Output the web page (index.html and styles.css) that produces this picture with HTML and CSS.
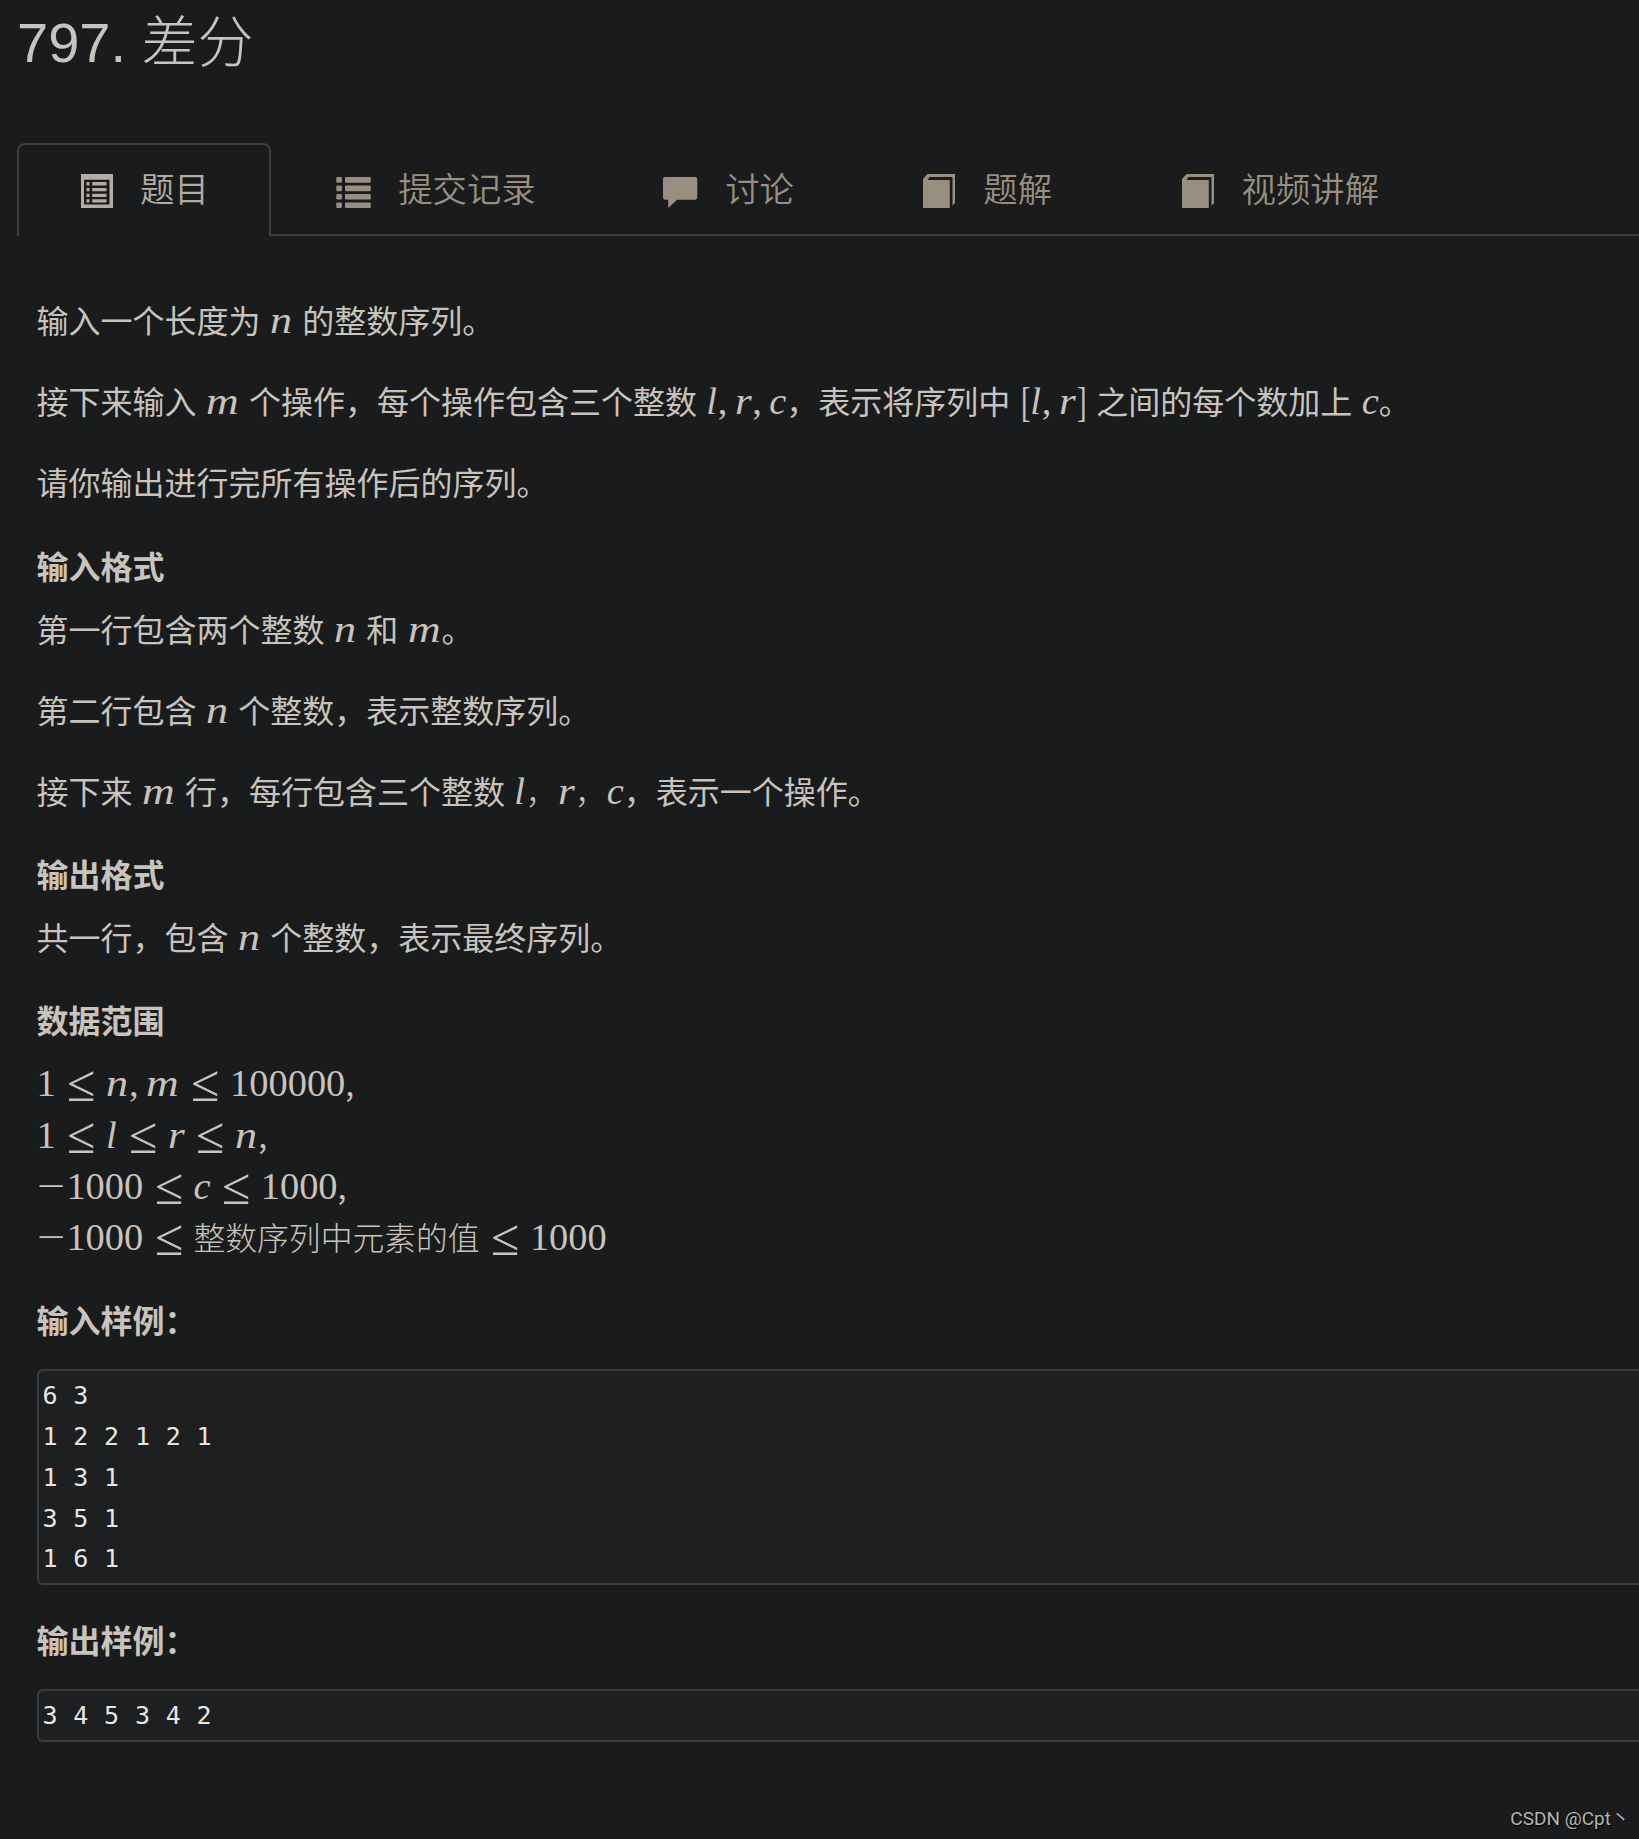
FILE: index.html
```html
<!DOCTYPE html>
<html lang="zh-CN">
<head>
  <meta charset="UTF-8" />
  <meta name="viewport" content="width=device-width, initial-scale=1.0"/>
  <title>797. 差分</title>
  <link rel="stylesheet" href="styles.css">
</head>
<body>

  <h1 class="title">797. 差分</h1>

  <div class="tabs">
    <a class="tab active">
      <svg class="icon" viewBox="0 0 34 34"><path fill-rule="evenodd" d="M3 0H35V34H3ZM6 5.7V30.5H31.5V5.7Z"/><path d="M8.5 8h3v3.5h-3zM14.2 8h14.3v3.5H14.2zM8.5 14h3v3.3h-3zM14.2 14h14.3v3.3H14.2zM8.5 19.7h3V23h-3zM14.2 19.7h14.3V23H14.2zM8.5 25.2h3v3.4h-3zM14.2 25.2h14.3v3.4H14.2z"/></svg>
      <span>题目</span>
    </a>
    <a class="tab">
      <svg class="icon" viewBox="0 0 34 34"><rect x="0.3" y="3" width="5.6" height="5.7" rx="1"/><rect x="9" y="3" width="25.8" height="5.7" rx="1"/><rect x="0.3" y="11.6" width="5.6" height="5.6" rx="1"/><rect x="9" y="11.6" width="25.8" height="5.6" rx="1"/><rect x="0.3" y="20" width="5.6" height="5.6" rx="1"/><rect x="9" y="20" width="25.8" height="5.6" rx="1"/><rect x="0.3" y="28.4" width="5.6" height="5.6" rx="1"/><rect x="9" y="28.4" width="25.8" height="5.6" rx="1"/></svg>
      <span>提交记录</span>
    </a>
    <a class="tab">
      <svg class="icon" viewBox="0 0 34 34"><path d="M2 3H32.3Q34.3 3 34.3 5V23.6Q34.3 25.7 32.3 25.7H14.2L5.2 34V25.7H2Q0 25.7 0 23.6V5Q0 3 2 3Z"/></svg>
      <span>讨论</span>
    </a>
    <a class="tab">
      <svg class="icon" viewBox="0 0 34 34"><path d="M2 5L6.5 0H34V29L31.5 31.5V3H8.5L6.5 6H28.8V34H2Z"/></svg>
      <span>题解</span>
    </a>
    <a class="tab">
      <svg class="icon" viewBox="0 0 34 34"><path d="M2 5L6.5 0H34V29L31.5 31.5V3H8.5L6.5 6H28.8V34H2Z"/></svg>
      <span>视频讲解</span>
    </a>
    <div class="tabs-rest"></div>
  </div>

  <div class="content">
    <p>输入一个长度为 <span class="math"><i class="n">n</i></span> 的整数序列。</p>
    <p>接下来输入 <span class="math"><i class="m">m</i></span> 个操作，每个操作包含三个整数 <span class="math"><i class="l">l</i><b>,</b><i class="r">r</i><b>,</b><i class="c">c</i></span>，表示将序列中 <span class="math"><u>[</u><i class="l">l</i><b>,</b><i class="r">r</i><u>]</u></span> 之间的每个数加上 <span class="math"><i class="c">c</i></span>。</p>
    <p>请你输出进行完所有操作后的序列。</p>

    <h4>输入格式</h4>
    <p>第一行包含两个整数 <span class="math"><i class="n">n</i></span> 和 <span class="math"><i class="m">m</i></span>。</p>
    <p>第二行包含 <span class="math"><i class="n">n</i></span> 个整数，表示整数序列。</p>
    <p>接下来 <span class="math"><i class="m">m</i></span> 行，每行包含三个整数 <span class="math"><i class="l">l</i><em>，</em><i class="r">r</i><em>，</em><i class="c">c</i></span>，表示一个操作。</p>

    <h4>输出格式</h4>
    <p>共一行，包含 <span class="math"><i class="n">n</i></span> 个整数，表示最终序列。</p>

    <h4>数据范围</h4>
    <p>
      <span class="math">1<s>≤</s><i class="n">n</i><b>,</b><i class="m">m</i><s>≤</s>100000</span>,<br />
      <span class="math">1<s>≤</s><i class="l">l</i><s>≤</s><i class="r">r</i><s>≤</s><i class="n">n</i></span>,<br />
      <span class="math"><s class="minus">−</s>1000<s>≤</s><i class="c">c</i><s>≤</s>1000</span>,<br />
      <span class="math"><s class="minus">−</s>1000<s>≤</s><em>整数序列中元素的值</em><s>≤</s>1000</span>
    </p>

    <h4>输入样例：</h4>
<pre>6 3
1 2 2 1 2 1
1 3 1
3 5 1
1 6 1</pre>

    <h4>输出样例：</h4>
<pre>3 4 5 3 4 2</pre>
  </div>

  <div class="watermark">CSDN @Cpt丶</div>

</body>
</html>
```

FILE: styles.css
```css
* {
  box-sizing: border-box;
}
body {
  margin: 0;
  height: 1839px;
  overflow: hidden;
  background: #1a1b1c;
  color: #c8c3bc;
  font-family: "Liberation Sans", "Noto Sans CJK SC", sans-serif;
  font-size: 32px;
}
.title {
  margin: 0;
  padding: 12px 0 0 17px;
  height: 143px;
  font-size: 56px;
  font-weight: 300;
  line-height: 62px;
}

/* tabs */
.tabs {
  display: flex;
  height: 93px;
  padding-left: 17px;
}
.tab {
  display: flex;
  flex: none;
  align-items: center;
  padding: 2px 62px 0 65.4px;
  border-bottom: 2px solid #3c3e40;
  color: #988f81;
  font-size: 34.4px;
  line-height: 44px;
}
.tab.active {
  padding: 0 60px 2px 59px;
  border: 2px solid #3c3e40;
  border-bottom: 0;
  border-radius: 8px 8px 0 0;
  color: #b2aca2;
}
.tab span {
  margin-top: -5px;
  font-family: "Noto Sans CJK SC", sans-serif;
  font-weight: 350;
}
.icon {
  width: 34px;
  height: 34px;
  margin: 3px 28px 0 0;
  overflow: visible;
  fill: currentColor;
}
.tabs-rest {
  flex: 1;
  border-bottom: 2px solid #3c3e40;
}

/* problem text */
.content {
  padding: 58px 0 0 36.5px;
  font-family: "Noto Sans CJK SC", sans-serif;
}
p {
  margin: 0 0 30px;
  line-height: 51.2px;
  word-spacing: 2.2px;
}
h4 {
  margin: 0 0 20px;
  padding-top: 10px;
  font-size: 32px;
  font-weight: 700;
  line-height: 35px;
}
pre {
  margin: 32px 0 27px;
  padding: 5px 0 3px 4px;
  border: 2px solid #3a3c3e;
  border-right: 0;
  border-radius: 6px 0 0 6px;
  background: #1d1f20;
  color: #e8e6e3;
  font-family: "DejaVu Sans Mono", monospace;
  font-size: 25px;
  letter-spacing: 0.35px;
  line-height: 40.8px;
}

/* formulas */
.math {
  font-family: "Liberation Serif", "Noto Sans CJK SC", serif;
  font-size: 38.4px;
  line-height: 1;
  word-spacing: 0;
  white-space: nowrap;
}
.math i,
.math b,
.math s,
.math u {
  display: inline-block;
  font-weight: normal;
  text-decoration: none;
  transform-origin: left center;
}
.math .n {
  margin-right: 0.1em;
  transform: scaleX(1.15);
}
.math .m {
  margin-right: 0.156em;
  transform: scaleX(1.18);
}
.math .r {
  margin-right: 0.062em;
  transform: scaleX(1.12);
}
.math .l {
  margin-right: 0.02em;
}
.math b {
  width: 0.445em;
}
.math u {
  width: 0.278em;
  transform: translateX(1px) scale(0.75, 1.12);
}
.math s {
  width: 0.77em;
  margin: 0 0.27em;
  transform: translate(1px, 1px) scale(1.35, 1.35);
}
.math .minus {
  width: 0.778em;
  margin: 0;
  transform: scaleX(1.3);
}
.math em {
  font-size: 31.8px;
  font-style: normal;
  font-weight: 300;
}

.watermark {
  padding: 36px 9px 0 0;
  color: #b4b4b4;
  font-family: Roboto, "Noto Sans CJK SC", sans-serif;
  font-size: 19px;
  line-height: 28px;
  text-align: right;
  text-shadow: 1px 1px 1px #000;
}
```
